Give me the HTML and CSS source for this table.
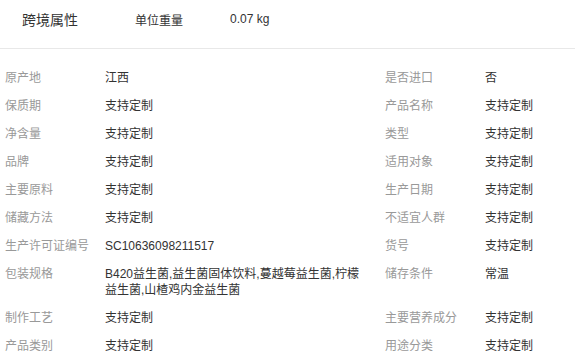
FILE: index.html
```html
<!DOCTYPE html>
<html lang="zh-CN">
<head>
<meta charset="utf-8">
<title>跨境属性</title>
<link rel="stylesheet" href="styles.css">
</head>
<body>
<div class="header">
  <div class="title">跨境属性</div>
  <div class="h-label">单位重量</div>
  <div class="h-value">0.07 kg</div>
</div>
<div class="attrs">
  <div class="item"><span class="label">原产地</span><span class="value">江西</span></div>
  <div class="item"><span class="label">是否进口</span><span class="value">否</span></div>
  <div class="item"><span class="label">保质期</span><span class="value">支持定制</span></div>
  <div class="item"><span class="label">产品名称</span><span class="value">支持定制</span></div>
  <div class="item"><span class="label">净含量</span><span class="value">支持定制</span></div>
  <div class="item"><span class="label">类型</span><span class="value">支持定制</span></div>
  <div class="item"><span class="label">品牌</span><span class="value">支持定制</span></div>
  <div class="item"><span class="label">适用对象</span><span class="value">支持定制</span></div>
  <div class="item"><span class="label">主要原料</span><span class="value">支持定制</span></div>
  <div class="item"><span class="label">生产日期</span><span class="value">支持定制</span></div>
  <div class="item"><span class="label">储藏方法</span><span class="value">支持定制</span></div>
  <div class="item"><span class="label">不适宜人群</span><span class="value">支持定制</span></div>
  <div class="item"><span class="label">生产许可证编号</span><span class="value">SC10636098211517</span></div>
  <div class="item"><span class="label">货号</span><span class="value">支持定制</span></div>
  <div class="item"><span class="label">包装规格</span><span class="value">B420益生菌,益生菌固体饮料,蔓越莓益生菌,柠檬益生菌,山楂鸡内金益生菌</span></div>
  <div class="item"><span class="label">储存条件</span><span class="value">常温</span></div>
  <div class="item"><span class="label">制作工艺</span><span class="value">支持定制</span></div>
  <div class="item"><span class="label">主要营养成分</span><span class="value">支持定制</span></div>
  <div class="item"><span class="label">产品类别</span><span class="value">支持定制</span></div>
  <div class="item"><span class="label">用途分类</span><span class="value">支持定制</span></div>
</div>
</body>
</html>
```

FILE: styles.css
```css
html, body {
  margin: 0;
  padding: 0;
  background: #ffffff;
}
body {
  font-family: "Liberation Sans", "Noto Sans CJK SC", sans-serif;
  font-size: 12px;
  color: #333333;
  overflow: hidden;
}
.header {
  display: flex;
  align-items: center;
  height: 38px;
  padding: 0 0 10px 22px;
  border-bottom: 1px solid #e8e8e8;
}
.title {
  width: 113px;
  font-size: 14px;
  color: #333333;
}
.h-label {
  width: 95px;
  font-size: 12px;
  color: #333333;
}
.h-value {
  font-size: 12px;
  color: #333333;
}
.attrs {
  display: grid;
  grid-template-columns: 380px minmax(0, 1fr);
  row-gap: 12px;
  padding: 21px 0 0 5px;
}
.item {
  display: flex;
  align-items: flex-start;
  line-height: 16px;
  min-width: 0;
}
.label {
  flex: 0 0 100px;
  color: #999999;
}
.value {
  flex: 0 1 auto;
  min-width: 0;
  max-width: 262px;
  color: #333333;
  word-break: break-all;
}
```
